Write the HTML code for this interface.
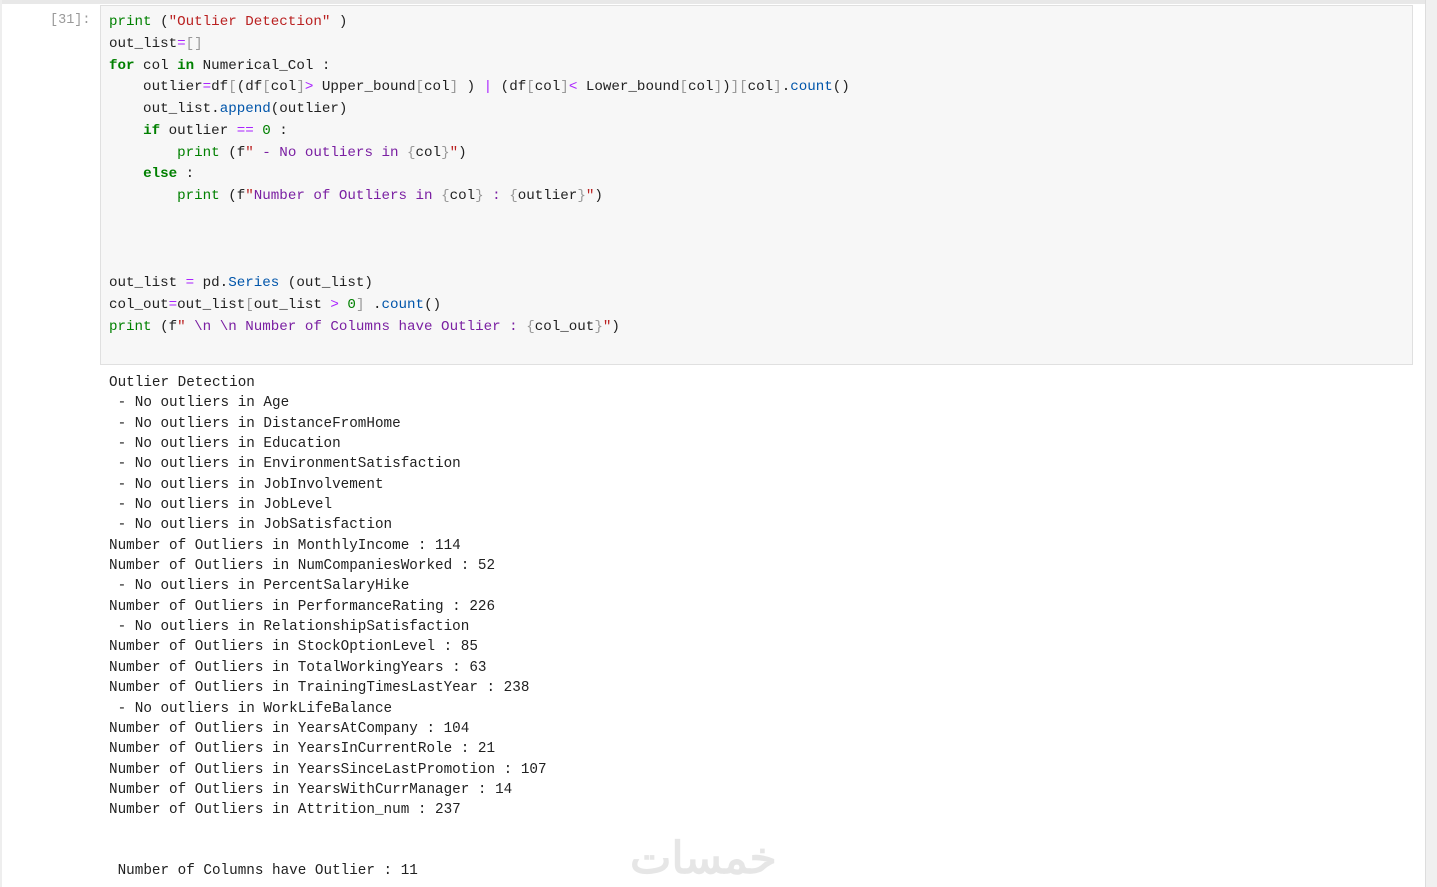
<!DOCTYPE html>
<html><head><meta charset="utf-8"><style>
body{margin:0;width:1437px;height:887px;background:#fff;overflow:hidden;position:relative;font-family:"Liberation Mono",monospace}
.top{position:absolute;left:0;top:0;width:1425px;height:4px;background:#e8e8e8}
.sb{position:absolute;left:1425px;top:0;width:12px;height:887px;background:#f0f0f0;border-left:1px solid #ddd}
.lb{position:absolute;left:0;top:0;width:2px;height:887px;background:#eee}
.prompt{position:absolute;left:50px;top:13px;color:#999;font-size:13.5px}
.cell{position:absolute;left:100px;top:5px;width:1311px;height:358px;background:#f7f7f7;border:1px solid #e0e0e0}
pre{margin:0;position:absolute;font-family:"Liberation Mono",monospace}
.code{left:109px;top:12px;font-size:14.2px;line-height:21.75px;color:#212121}
.out{left:109px;top:373px;font-size:14.3px;line-height:20.35px;color:#212121}
.k{color:#008000;font-weight:bold}.b{color:#008000}.s{color:#ba2121}.f{color:#7a1fa2}.o{color:#aa22ff}.g{color:#999}.m{color:#0055aa}.n{color:#008000}
.wm{position:absolute;left:630px;top:822px;font-family:"Noto Sans CJK SC",sans-serif;font-size:44px;color:#e6e6e6;font-weight:bold}
</style></head><body>
<div class="top"></div><div class="lb"></div><div class="sb"></div>
<div class="prompt">[31]:</div>
<div class="cell"></div>
<pre class="code"><span class="b">print</span> (<span class="s">"Outlier Detection"</span> )
out_list<span class="o">=</span><span class="g">[]</span>
<span class="k">for</span> col <span class="k">in</span> Numerical_Col :
    outlier<span class="o">=</span>df<span class="g">[</span>(df<span class="g">[</span>col<span class="g">]</span><span class="o">&gt;</span> Upper_bound<span class="g">[</span>col<span class="g">]</span> ) <span class="o">|</span> (df<span class="g">[</span>col<span class="g">]</span><span class="o">&lt;</span> Lower_bound<span class="g">[</span>col<span class="g">]</span>)<span class="g">][</span>col<span class="g">]</span>.<span class="m">count</span>()
    out_list.<span class="m">append</span>(outlier)
    <span class="k">if</span> outlier <span class="o">==</span> <span class="n">0</span> :
        <span class="b">print</span> (f<span class="s">"</span><span class="f"> - No outliers in </span><span class="g">{</span>col<span class="g">}</span><span class="s">"</span>)
    <span class="k">else</span> :
        <span class="b">print</span> (f<span class="s">"</span><span class="f">Number of Outliers in </span><span class="g">{</span>col<span class="g">}</span><span class="f"> : </span><span class="g">{</span>outlier<span class="g">}</span><span class="s">"</span>)



out_list <span class="o">=</span> pd.<span class="m">Series</span> (out_list)
col_out<span class="o">=</span>out_list<span class="g">[</span>out_list <span class="o">&gt;</span> <span class="n">0</span><span class="g">]</span> .<span class="m">count</span>()
<span class="b">print</span> (f<span class="s">"</span><span class="f"> \n \n Number of Columns have Outlier : </span><span class="g">{</span>col_out<span class="g">}</span><span class="s">"</span>)</pre>
<pre class="out">Outlier Detection
 - No outliers in Age
 - No outliers in DistanceFromHome
 - No outliers in Education
 - No outliers in EnvironmentSatisfaction
 - No outliers in JobInvolvement
 - No outliers in JobLevel
 - No outliers in JobSatisfaction
Number of Outliers in MonthlyIncome : 114
Number of Outliers in NumCompaniesWorked : 52
 - No outliers in PercentSalaryHike
Number of Outliers in PerformanceRating : 226
 - No outliers in RelationshipSatisfaction
Number of Outliers in StockOptionLevel : 85
Number of Outliers in TotalWorkingYears : 63
Number of Outliers in TrainingTimesLastYear : 238
 - No outliers in WorkLifeBalance
Number of Outliers in YearsAtCompany : 104
Number of Outliers in YearsInCurrentRole : 21
Number of Outliers in YearsSinceLastPromotion : 107
Number of Outliers in YearsWithCurrManager : 14
Number of Outliers in Attrition_num : 237
 
 
 Number of Columns have Outlier : 11</pre>
<div class="wm">خمسات</div>
</body></html>
